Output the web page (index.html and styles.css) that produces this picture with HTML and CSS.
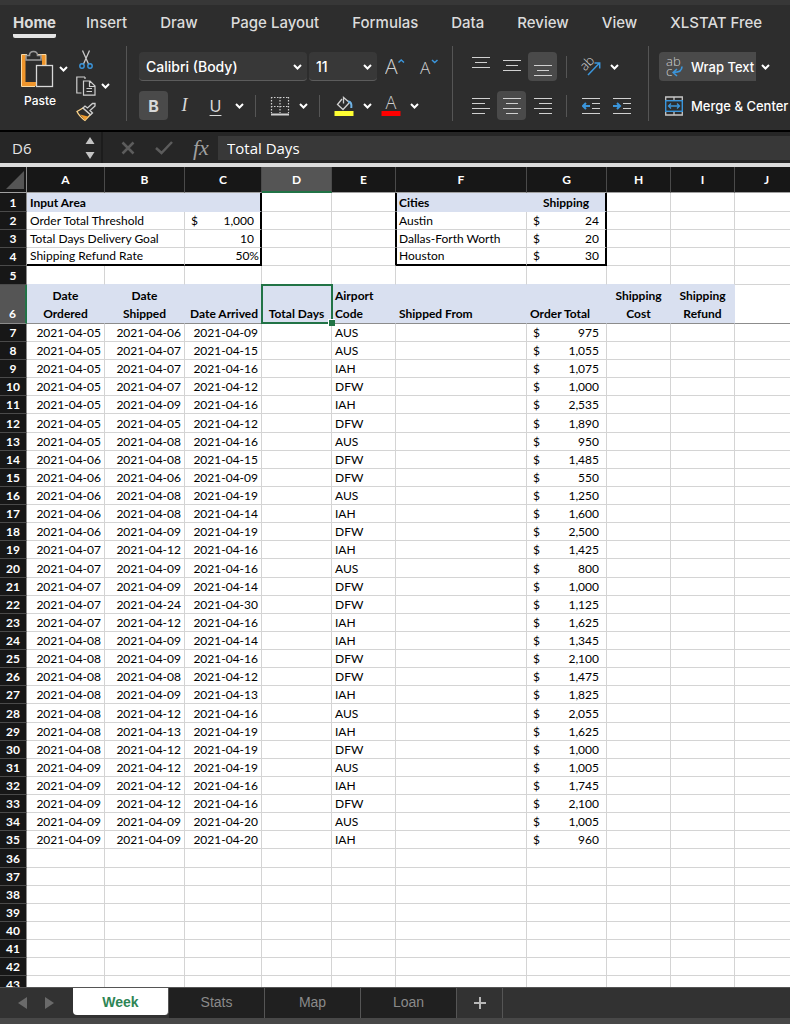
FILE: index.html
```html
<!DOCTYPE html>
<html lang="en">
<head>
  <meta charset="UTF-8" />
  <title>Orders - Week</title>
  <link rel="stylesheet" href="styles.css">
</head>
<body>
  <nav class="menu">
    <a class="active" href="#home">Home</a>
    <a href="#insert">Insert</a>
    <a href="#draw">Draw</a>
    <a href="#layout">Page Layout</a>
    <a href="#formulas">Formulas</a>
    <a href="#data">Data</a>
    <a href="#review">Review</a>
    <a href="#view">View</a>
    <a href="#xlstat">XLSTAT Free</a>
  </nav>

  <div class="ribbon">
    <div class="group clipboard">
      <div class="paste-box">
        <button class="paste">
          <svg width="40" height="38" viewBox="0 0 40 38" fill="none">
            <path d="M7 6.500H3.500V34H16" stroke="#f0962c" stroke-width="4"/>
            <path d="M18 6.500H24V15" stroke="#f0962c" stroke-width="4"/>
            <path d="M7 4.500H1.500V36.500H15M18 4.500H26V15" stroke="#fbdca6" stroke-width="1"/>
            <path d="M6 10V5.500H9.500C9.500 3 11 1.500 13.500 1.500S17.500 3 17.500 5.500H21V10Z" fill="#2d2d2d" stroke="#9a9a9a" stroke-width="1.500"/>
            <rect x="16.500" y="15.500" width="16" height="21" fill="#2d2d2d" stroke="#d8d8d8" stroke-width="1.300"/>
          </svg>
          <span>Paste</span>
        </button>
        <button class="caret" aria-label="Paste options"><svg width="9" height="6" viewBox="0 0 9 6"><path d="M1 1l3.500 3.500L8 1"/></svg></button>
      </div>
      <div class="clip-tools">
        <div class="row">
          <button class="small" aria-label="Cut">
            <svg width="20" height="20" viewBox="0 0 20 20" fill="none">
              <path d="M6.500 0.500L12.500 14M13.500 0.500L7.500 14" stroke="#c8c8c8" stroke-width="1.300"/>
              <circle cx="6" cy="16" r="2.200" stroke="#3b96dc" stroke-width="1.400"/>
              <circle cx="14" cy="16" r="2.200" stroke="#3b96dc" stroke-width="1.400"/>
            </svg>
          </button>
        </div>
        <div class="row">
          <button class="small" aria-label="Copy">
            <svg width="20" height="20" viewBox="0 0 20 20" fill="none" stroke="#cfcfcf" stroke-width="1.200">
              <path d="M9 1H0.800V17H5.500M9 1V3M7.500 5H14L19 10V19.200H7.500ZM13.500 5V10.500H19M10.500 12.500H16M10.500 15.500H16"/>
            </svg>
          </button>
          <button class="caret" aria-label="Copy options"><svg width="9" height="6" viewBox="0 0 9 6"><path d="M1 1l3.500 3.500L8 1"/></svg></button>
        </div>
        <div class="row">
          <button class="small" aria-label="Format painter">
            <svg width="20" height="20" viewBox="0 0 20 20" fill="none">
              <path d="M7 6L1 9.500C3 14 5 15.500 9 18.500L14.500 12.500Z" fill="#2d2d2d" stroke="#fbd38a" stroke-width="1.300"/>
              <path d="M4 12.500L12 14.500L9 18Z" fill="#f09a2c"/>
              <path d="M7 6L9 4L11.500 6L16.500 1.500L19 1.500V4L14 8.500L16.500 11L14.500 12.800Z" fill="#2d2d2d" stroke="#cfcfcf" stroke-width="1.300"/>
            </svg>
          </button>
        </div>
      </div>
    </div>

    <div class="group stacked">
      <div class="row">
        <div class="picker family">
          <select aria-label="Font"><option>Calibri (Body)</option><option>Arial</option></select>
          <svg width="9" height="6" viewBox="0 0 9 6"><path d="M1 1l3.500 3.500L8 1"/></svg>
        </div>
        <div class="picker size">
          <select aria-label="Font size"><option>11</option><option>12</option></select>
          <svg width="9" height="6" viewBox="0 0 9 6"><path d="M1 1l3.500 3.500L8 1"/></svg>
        </div>
        <button class="tool" aria-label="Increase font size">
          <svg width="20" height="20" viewBox="0 0 20 20" fill="none">
            <text class="glyph" x="0" y="17" font-size="21">A</text>
            <path d="M13.500 5.500L16.200 3L19 5.500" stroke="#3b96dc" stroke-width="1.500"/>
          </svg>
        </button>
        <button class="tool" aria-label="Decrease font size">
          <svg width="20" height="20" viewBox="0 0 20 20" fill="none">
            <text class="glyph" x="1" y="17" font-size="17">A</text>
            <path d="M13 3L15.700 5.500L18.500 3" stroke="#3b96dc" stroke-width="1.500"/>
          </svg>
        </button>
      </div>
      <div class="row">
        <button class="tool on bold">B</button>
        <button class="tool italic">I</button>
        <button class="tool underline">U</button>
        <button class="caret" aria-label="Underline options"><svg width="9" height="6" viewBox="0 0 9 6"><path d="M1 1l3.500 3.500L8 1"/></svg></button>
        <span class="sep"></span>
        <button class="tool" aria-label="Borders">
          <svg width="20" height="20" viewBox="0 0 20 20" fill="none" stroke="#d0d0d0">
            <path d="M1 1.500H19M1 10.500H19M1.500 1V17M10 1V17M18.500 1V17" stroke-width="1.200" stroke-dasharray="1.500 1.500"/>
            <path d="M1 18.500H19" stroke-width="2"/>
          </svg>
        </button>
        <button class="caret" aria-label="Border options"><svg width="9" height="6" viewBox="0 0 9 6"><path d="M1 1l3.500 3.500L8 1"/></svg></button>
        <span class="sep"></span>
        <button class="tool" aria-label="Fill color">
          <svg width="20" height="20" viewBox="0 0 20 20" fill="none">
            <path d="M8 3L3.500 8.500L9 13.500L15.500 6.500L9.500 1.500V7.500" stroke="#d0d0d0" stroke-width="1.300"/>
            <path d="M14 5.500C17 5.500 17.800 8 17.300 12" stroke="#6fb3e6" stroke-width="2"/>
            <rect x="0.500" y="15" width="19" height="5" fill="#ffff33"/>
          </svg>
        </button>
        <button class="caret" aria-label="Fill options"><svg width="9" height="6" viewBox="0 0 9 6"><path d="M1 1l3.500 3.500L8 1"/></svg></button>
        <button class="tool" aria-label="Font color">
          <svg width="20" height="20" viewBox="0 0 20 20" fill="none">
            <text class="glyph" x="10" y="13" font-size="18" text-anchor="middle">A</text>
            <rect x="0.500" y="15" width="19" height="5" fill="#ff0000"/>
          </svg>
        </button>
        <button class="caret" aria-label="Font color options"><svg width="9" height="6" viewBox="0 0 9 6"><path d="M1 1l3.500 3.500L8 1"/></svg></button>
      </div>
    </div>

    <div class="group stacked align">
      <div class="row">
        <button class="tool" aria-label="Top align"><svg class="lines" width="18" height="20" viewBox="0 0 18 20"><path d="M0 0.500H18M3 5.500H15M0 10.500H18"/></svg></button>
        <button class="tool" aria-label="Middle align"><svg class="lines" width="18" height="20" viewBox="0 0 18 20"><path d="M0 3.500H18M3 8.500H15M0 13.500H18"/></svg></button>
        <button class="tool on" aria-label="Bottom align"><svg class="lines" width="18" height="20" viewBox="0 0 18 20"><path d="M0 8.500H18M3 13.500H15M0 18.500H18"/></svg></button>
        <span class="sep"></span>
        <button class="tool" aria-label="Orientation">
          <svg width="20" height="20" viewBox="0 0 20 20" fill="none">
            <text class="glyph" x="4" y="14.500" font-size="13" transform="rotate(-45 4 14.500)">ab</text>
            <path d="M7 18L18.500 6M13.500 6H18.700V11.500" stroke="#3b96dc" stroke-width="1.500"/>
          </svg>
        </button>
        <button class="caret" aria-label="Orientation options"><svg width="9" height="6" viewBox="0 0 9 6"><path d="M1 1l3.500 3.500L8 1"/></svg></button>
      </div>
      <div class="row">
        <button class="tool" aria-label="Align left"><svg class="lines" width="18" height="18" viewBox="0 0 18 18"><path d="M0 1.500H18M0 6.500H13M0 11.500H18M0 16.500H13"/></svg></button>
        <button class="tool on" aria-label="Center"><svg class="lines" width="18" height="18" viewBox="0 0 18 18"><path d="M0 1.500H18M3 6.500H15M0 11.500H18M3 16.500H15"/></svg></button>
        <button class="tool" aria-label="Align right"><svg class="lines" width="18" height="18" viewBox="0 0 18 18"><path d="M0 1.500H18M5 6.500H18M0 11.500H18M5 16.500H18"/></svg></button>
        <span class="sep"></span>
        <button class="tool" aria-label="Decrease indent">
          <svg class="lines" width="18" height="18" viewBox="0 0 18 18"><path d="M0 1.500H18M10 6.500H18M10 11.500H18M0 16.500H18"/><path class="blue" d="M8 9H1M4 6L1 9L4 12"/></svg>
        </button>
        <button class="tool" aria-label="Increase indent">
          <svg class="lines" width="18" height="18" viewBox="0 0 18 18"><path d="M0 1.500H18M10 6.500H18M10 11.500H18M0 16.500H18"/><path class="blue" d="M0 9H7M4 6L7 9L4 12"/></svg>
        </button>
      </div>
    </div>

    <div class="group stacked wrap-group">
      <div class="row">
        <button class="wide on">
          <svg width="18" height="20" viewBox="0 0 18 20" fill="none">
            <text class="glyph" x="1" y="9" font-size="13">ab</text>
            <text class="glyph" x="1" y="19" font-size="13">c</text>
            <path d="M17 9.500C17 14 14 15.500 8.500 15.500M12 12L8.200 15.500L12 19" stroke="#3b96dc" stroke-width="1.600"/>
          </svg>
          <span>Wrap Text</span>
        </button>
        <button class="caret" aria-label="Wrap options"><svg width="9" height="6" viewBox="0 0 9 6"><path d="M1 1l3.500 3.500L8 1"/></svg></button>
      </div>
      <div class="row">
        <button class="wide">
          <svg width="18" height="20" viewBox="0 0 18 20" fill="none">
            <path d="M0.700 5V1H17.300V5M0.700 15V19H17.300V15M9 1V4M9 16V19" stroke="#c8c8c8" stroke-width="1.300"/>
            <rect x="0.700" y="4.700" width="16.600" height="10.600" stroke="#3b96dc" stroke-width="1.400"/>
            <path d="M3.500 10H14.500M6 7.500L3.500 10L6 12.500M12 7.500L14.500 10L12 12.500" stroke="#3b96dc" stroke-width="1.300"/>
          </svg>
          <span>Merge &amp; Center</span>
        </button>
      </div>
    </div>
  </div>

  <div class="formula-bar">
    <div class="name-box">
      <input type="text" value="D6" aria-label="Name box" />
      <svg width="10" height="22" viewBox="0 0 10 22"><path d="M5 0L9.500 7H0.500ZM5 22L9.500 15H0.500Z" fill="#c4c4c4"/></svg>
    </div>
    <div class="formula-tools">
      <svg width="14" height="14" viewBox="0 0 14 14" fill="none"><path d="M1.500 1.500L12.500 12.500M12.500 1.500L1.500 12.500" stroke="#5c5c5c" stroke-width="2.500"/></svg>
      <svg width="18" height="14" viewBox="0 0 18 14" fill="none"><path d="M1 7L6.500 12L17 1" stroke="#5c5c5c" stroke-width="2.500"/></svg>
      <span class="fx">fx</span>
    </div>
    <input class="formula" type="text" value="Total Days" aria-label="Formula" />
  </div>

  <main class="sheet">
    <table>
      <colgroup>
        <col class="w-head"><col class="w-a"><col class="w-b"><col class="w-c"><col class="w-d"><col class="w-e">
        <col class="w-f"><col class="w-g"><col class="w-h"><col class="w-i"><col class="w-j">
      </colgroup>
      <thead>
        <tr>
          <th class="corner"><svg width="18" height="18" viewBox="0 0 18 18"><path d="M18 0V18H0Z" fill="#555"/></svg></th>
          <th>A</th><th>B</th><th>C</th><th class="picked">D</th><th>E</th>
          <th>F</th><th>G</th><th>H</th><th>I</th><th>J</th>
        </tr>
      </thead>
      <tbody id="rows">
        <tr class="tall">
          <th>1</th><td class="fill edge-right" colspan="3">Input Area</td><td></td><td class="before-box"></td>
          <td class="fill edge-left">Cities</td><td class="fill edge-right center">Shipping</td><td></td><td></td><td></td>
        </tr>
        <tr>
          <th>2</th><td colspan="2">Order Total Threshold</td><td class="edge-right money"><div><span>$</span><span>1,000</span></div></td><td></td><td class="before-box"></td>
          <td class="edge-left">Austin</td><td class="edge-right money"><div><span>$</span><span>24</span></div></td><td></td><td></td><td></td>
        </tr>
        <tr>
          <th>3</th><td colspan="2">Total Days Delivery Goal</td><td class="edge-right money right">10</td><td></td><td class="before-box"></td>
          <td class="edge-left">Dallas-Forth Worth</td><td class="edge-right money"><div><span>$</span><span>20</span></div></td><td></td><td></td><td></td>
        </tr>
        <tr class="box-end">
          <th>4</th><td class="edge-bottom" colspan="2">Shipping Refund Rate</td><td class="edge-right edge-bottom right percent">50%</td><td></td><td class="before-box"></td>
          <td class="edge-left edge-bottom">Houston</td><td class="edge-right edge-bottom money"><div><span>$</span><span>30</span></div></td><td></td><td></td><td></td>
        </tr>
        <tr class="spacer">
          <th>5</th><td></td><td></td><td></td><td></td><td></td><td></td><td></td><td></td><td></td><td></td>
        </tr>
        <tr class="titles">
          <th class="picked">6</th>
          <td class="fill center">Date<br>Ordered</td>
          <td class="fill center">Date<br>Shipped</td>
          <td class="fill right">Date Arrived</td>
          <td class="fill center selected">Total Days</td>
          <td class="fill">Airport<br>Code</td>
          <td class="fill">Shipped From</td>
          <td class="fill total">Order Total</td>
          <td class="fill center">Shipping<br>Cost</td>
          <td class="fill center">Shipping<br>Refund</td>
          <td></td>
        </tr>
      </tbody>
    </table>
  </main>

  <footer class="tabs">
    <div class="arrows">
      <button aria-label="Previous sheet"><svg width="9" height="12" viewBox="0 0 9 12"><path d="M9 0V12L0 6Z" fill="#6a6a6a"/></svg></button>
      <button aria-label="Next sheet"><svg width="9" height="12" viewBox="0 0 9 12"><path d="M0 0V12L9 6Z" fill="#6a6a6a"/></svg></button>
    </div>
    <a class="tab active" href="#week">Week</a>
    <a class="tab" href="#stats">Stats</a>
    <a class="tab" href="#map">Map</a>
    <a class="tab" href="#loan">Loan</a>
    <button class="add" aria-label="Add sheet"><svg width="12" height="12" viewBox="0 0 12 12"><path d="M6 0V12M0 6H12" stroke="#b8b8b8" stroke-width="2"/></svg></button>
  </footer>

  <script>
    // ordered, shipped, arrived (month-day), airport, total
    const orders = [
      ['04-05', '04-06', '04-09', 'AUS', '975'],
      ['04-05', '04-07', '04-15', 'AUS', '1,055'],
      ['04-05', '04-07', '04-16', 'IAH', '1,075'],
      ['04-05', '04-07', '04-12', 'DFW', '1,000'],
      ['04-05', '04-09', '04-16', 'IAH', '2,535'],
      ['04-05', '04-05', '04-12', 'DFW', '1,890'],
      ['04-05', '04-08', '04-16', 'AUS', '950'],
      ['04-06', '04-08', '04-15', 'DFW', '1,485'],
      ['04-06', '04-06', '04-09', 'DFW', '550'],
      ['04-06', '04-08', '04-19', 'AUS', '1,250'],
      ['04-06', '04-08', '04-14', 'IAH', '1,600'],
      ['04-06', '04-09', '04-19', 'DFW', '2,500'],
      ['04-07', '04-12', '04-16', 'IAH', '1,425'],
      ['04-07', '04-09', '04-16', 'AUS', '800'],
      ['04-07', '04-09', '04-14', 'DFW', '1,000'],
      ['04-07', '04-24', '04-30', 'DFW', '1,125'],
      ['04-07', '04-12', '04-16', 'IAH', '1,625'],
      ['04-08', '04-09', '04-14', 'IAH', '1,345'],
      ['04-08', '04-09', '04-16', 'DFW', '2,100'],
      ['04-08', '04-08', '04-12', 'DFW', '1,475'],
      ['04-08', '04-09', '04-13', 'IAH', '1,825'],
      ['04-08', '04-12', '04-16', 'AUS', '2,055'],
      ['04-08', '04-13', '04-19', 'IAH', '1,625'],
      ['04-08', '04-12', '04-19', 'DFW', '1,000'],
      ['04-09', '04-12', '04-19', 'AUS', '1,005'],
      ['04-09', '04-12', '04-16', 'IAH', '1,745'],
      ['04-09', '04-12', '04-16', 'DFW', '2,100'],
      ['04-09', '04-09', '04-20', 'AUS', '1,005'],
      ['04-09', '04-09', '04-20', 'IAH', '960']
    ];
    const rows = document.getElementById('rows');
    let html = '';

    for (let n = 7; n <= 43; n++) {
      const order = orders[n - 7];
      html += `<tr><th>${n}</th>`;
      if (order) {
        const [ordered, shipped, arrived, airport, total] = order;
        html += `<td class="right">2021-${ordered}</td><td class="right">2021-${shipped}</td><td class="right">2021-${arrived}</td>`;
        html += `<td></td><td>${airport}</td><td></td>`;
        html += `<td class="money"><div><span>$</span><span>${total}</span></div></td>`;
        html += '<td></td>'.repeat(3);
      } else {
        html += '<td></td>'.repeat(10);
      }
      html += '</tr>';
    }
    rows.insertAdjacentHTML('beforeend', html);
  </script>
</body>
</html>
```

FILE: styles.css
```css
* {
  box-sizing: border-box;
}
body {
  margin: 0;
  height: 100vh;
  display: flex;
  flex-direction: column;
  overflow: hidden;
  background: #2d2d2d;
  color: #e4e4e4;
  font-family: Inter, "Liberation Sans", sans-serif;
}
button, input, select {
  font-family: inherit;
  color: inherit;
  background: none;
  border: none;
  margin: 0;
  padding: 0;
}
a {
  text-decoration: none;
}
svg {
  display: block;
  flex: none;
}

/* menu */
.menu {
  display: flex;
  flex: none;
  gap: 33px;
  height: 46px;
  padding: 8px 13px 0;
  border-top: 5px solid #373737;
  white-space: nowrap;
}
.menu a {
  height: 25px;
  line-height: 20px;
  font-size: 15px;
  font-weight: 500;
  color: #dcdcdc;
}
.menu .active {
  margin-right: -3px;
  font-weight: 700;
  border-bottom: 4px solid #e4e4e4;
  border-radius: 2px;
}

/* ribbon */
.ribbon {
  display: flex;
  flex: none;
  height: 86px;
  padding-bottom: 9px;
  border-bottom: 2px solid #000;
}
.group {
  display: flex;
  flex: none;
  border-left: 1px solid #555;
}
.clipboard {
  width: 126px;
  padding: 4px 0 0 20px;
  border-left: none;
}
.stacked {
  flex-direction: column;
  gap: 10px;
  width: 326px;
  padding: 6px 0 0 12px;
}
.align {
  width: 196px;
  padding-left: 13px;
}
.wrap-group {
  flex: 1;
  padding-left: 10px;
}
.row {
  display: flex;
  align-items: center;
  gap: 2px;
}
.paste-box {
  display: flex;
  align-items: flex-start;
}
.paste {
  display: flex;
  flex-direction: column;
  align-items: center;
  gap: 5px;
  width: 40px;
  font-size: 12px;
  font-weight: 500;
  line-height: 16px;
  color: #fff;
}
.clip-tools {
  display: flex;
  flex-direction: column;
  gap: 6px;
  margin-left: 6px;
}
.paste-box .caret {
  margin: 16px 0 0 -4px;
}
.small {
  width: 20px;
}
.caret {
  width: 14px;
  display: flex;
  justify-content: center;
}
.caret path, .picker path {
  fill: none;
  stroke: #fff;
  stroke-width: 2;
}
.tool {
  display: flex;
  align-items: center;
  justify-content: center;
  width: 29px;
  height: 29px;
  border-radius: 4px;
  font-size: 16px;
  color: #d8d8d8;
}
.on {
  background: #4a4a4a;
}
.bold {
  font-weight: 700;
}
.italic {
  font-family: "Liberation Serif", serif;
  font-style: italic;
  font-size: 18px;
}
.underline {
  text-decoration: underline;
  text-underline-offset: 3px;
}
.glyph {
  fill: #cfcfcf;
  font-family: "Open Sans", sans-serif;
  font-weight: 300;
}
.sep {
  width: 1px;
  height: 22px;
  margin: 0 7px;
  background: #555;
}
.picker {
  position: relative;
  height: 29px;
  background: #383838;
  border-bottom: 1px solid #5c5c5c;
  border-radius: 4px;
}
.picker select {
  width: 100%;
  height: 28px;
  padding-left: 7px;
  appearance: none;
  font-size: 14px;
  font-weight: 500;
  color: #fff;
}
.picker svg {
  position: absolute;
  right: 5px;
  top: 12px;
  pointer-events: none;
}
.family {
  width: 168px;
}
.size {
  width: 68px;
}
.size + .tool, .size + .tool + .tool {
  width: 32px;
}
.lines path {
  fill: none;
  stroke: #d0d0d0;
  stroke-width: 1;
}
.lines .blue {
  stroke: #3b96dc;
  stroke-width: 2;
}
.wide {
  display: flex;
  align-items: center;
  gap: 8px;
  height: 29px;
  padding: 0 2px 0 6px;
  border-radius: 4px 0 0 4px;
  font-size: 13px;
  font-weight: 500;
  color: #fff;
  white-space: nowrap;
}

/* formula bar */
.formula-bar {
  display: flex;
  flex: none;
  align-items: center;
  height: 35px;
  background: #262626;
  border-bottom: 4px solid #dcdcdc;
  font-family: "Open Sans", sans-serif;
}
.name-box {
  display: flex;
  align-items: center;
  justify-content: space-between;
  width: 103px;
  height: 100%;
  padding: 0 6px 0 12px;
  border-right: 2px solid #1c1c1c;
}
.name-box input {
  width: 60px;
  font-size: 15px;
}
.formula-tools {
  display: flex;
  align-items: center;
  gap: 20px;
  width: 115px;
  padding-left: 18px;
}
.fx {
  font-family: "Liberation Serif", serif;
  font-style: italic;
  font-size: 22px;
  line-height: 24px;
  color: #a0a0a0;
}
.formula {
  flex: 1;
  height: 24px;
  padding-left: 9px;
  background: #383838;
  font-size: 15px;
  color: #fff;
}

/* sheet */
.sheet {
  flex: 1;
  min-height: 0;
  overflow: hidden;
  background: #fff;
}
table {
  table-layout: fixed;
  width: 799px;
  border-collapse: separate;
  border-spacing: 0;
  font-family: Lato, sans-serif;
  font-size: 12px;
  line-height: 17px;
  color: #000;
}
.w-head { width: 27px; }
.w-a { width: 78px; }
.w-b { width: 80px; }
.w-c { width: 77px; }
.w-d { width: 70px; }
.w-e { width: 64px; }
.w-f { width: 131px; }
.w-g { width: 80px; }
.w-h, .w-i, .w-j { width: 64px; }
th {
  padding: 0;
  background: #171717;
  border-right: 1px solid #8c8c8c;
  border-bottom: 1px solid #4a4a4a;
  color: #fff;
  vertical-align: bottom;
}
thead th {
  height: 26px;
  border-right-color: #4a4a4a;
  border-bottom-color: #a0a0a0;
  vertical-align: middle;
}
.corner {
  border-right-color: #8c8c8c;
}
.corner svg {
  margin-left: 6px;
}
th.picked {
  background: #555;
}
thead .picked {
  border-bottom: 2px solid #217346;
}
tbody .picked {
  border-right: 2px solid #217346;
}
td {
  height: 18px;
  padding: 0 3px;
  border-right: 1px solid #d4d4d4;
  border-bottom: 1px solid #d4d4d4;
  white-space: nowrap;
  vertical-align: bottom;
}
.tall td, .spacer td, tr:nth-child(8n+12) td {
  height: 19px;
}
.right {
  text-align: right;
}
.center {
  text-align: center;
}
.money {
  padding: 0 7px 0 6px;
}
.money div {
  display: flex;
  justify-content: space-between;
}
.fill {
  background: #d9e0f0;
  border-color: #d9e0f0;
  font-weight: 700;
}
.edge-right {
  border-right: 2px solid #000;
}
.edge-right.money {
  padding-right: 6px;
}
.edge-right.percent {
  padding-right: 1px;
}
.edge-left {
  border-left: 1px solid #000;
  padding-left: 2px;
}
.before-box {
  border-right-color: #000;
}
.box-end td {
  line-height: 16px;
}
.edge-bottom {
  border-bottom: 2px solid #000;
}
.spacer td {
  border-bottom-color: #d9e0f0;
}
.spacer td:last-child {
  border-bottom-color: #d4d4d4;
}
.titles td, .titles th {
  height: 39px;
  line-height: 18px;
  border-bottom-color: #8c8c8c;
}
.titles .center {
  padding: 0;
}
.selected {
  position: relative;
}
.selected::before {
  content: "";
  position: absolute;
  inset: -1px -2px -1px -1px;
  border: 2px solid #217346;
}
.selected::after {
  content: "";
  position: absolute;
  right: -4px;
  bottom: -3px;
  width: 6px;
  height: 6px;
  background: #217346;
  border: 1px solid #fff;
  border-width: 1px 0 0 1px;
}

/* sheet tabs */
.tabs {
  display: flex;
  flex: none;
  height: 37px;
  background: #323232;
  border-top: 1px solid #555;
  border-bottom: 6px solid #484848;
  font-family: "Liberation Sans", sans-serif;
}
.arrows {
  display: flex;
  align-items: center;
  gap: 18px;
  width: 73px;
  padding-left: 18px;
}
.tab {
  width: 96px;
  background: #202020;
  border-right: 1px solid #555;
  line-height: 28px;
  font-size: 14px;
  text-align: center;
  color: #8a8a8a;
}
.tab.active {
  height: 27px;
  background: #fff;
  border-radius: 0 0 4px 4px;
  font-weight: 700;
  color: #2e8555;
}
.add {
  display: flex;
  align-items: center;
  justify-content: center;
  width: 46px;
  border-right: 1px solid #555;
}
```
